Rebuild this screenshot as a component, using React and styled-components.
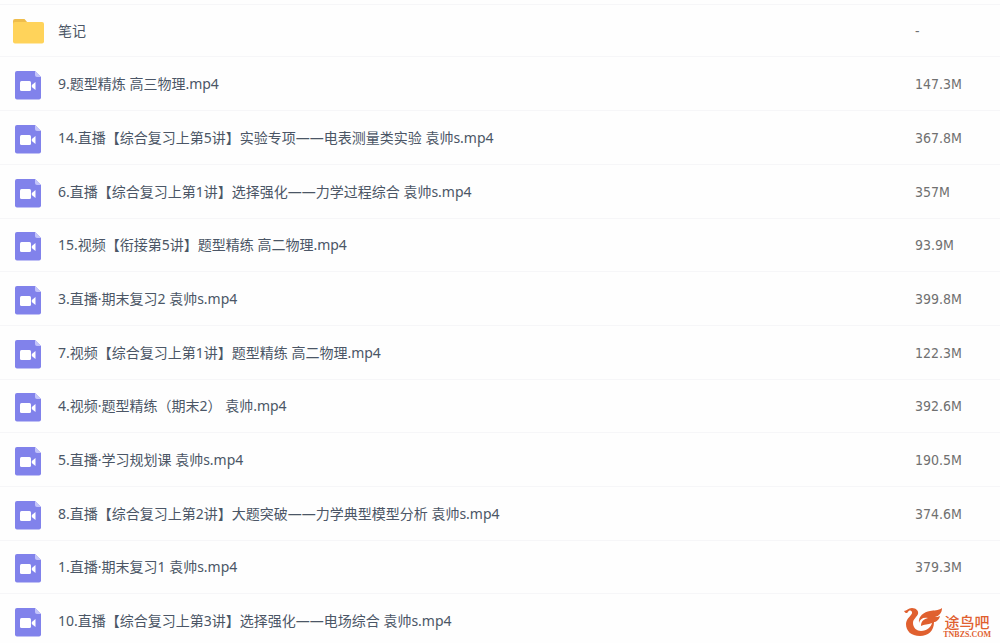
import styled, { createGlobalStyle } from "styled-components";

const GlobalStyle = createGlobalStyle`
  body {
    margin: 0;
    background: #fefefe;
    font-family: "Noto Sans", "Noto Sans CJK SC", sans-serif;
    font-size: 14px;
    line-height: 20px;
  }
`

const Page = styled.main`
  position: relative;
  height: 100vh;
  overflow: hidden;
`

const FileTable = styled.table`
  width: 100%;
  margin-top: 4px;
  border-spacing: 0;
  border-top: 1px solid #f6f6f8;
`

const FileRow = styled.tr`
  height: 54px;
  &:first-child {
    height: 52px;
  }
  &:nth-child(3n + 5) {
    height: 53px;
  }
`

const Cell = styled.td`
  padding: 0;
  border-bottom: 1px solid #f6f6f8;
  vertical-align: middle;
`

const IconCell = styled(Cell)`
  width: 56px;
  svg {
    display: block;
    margin: 0 auto;
  }
`

const NameCell = styled(Cell)`
  padding-left: 2px;
`

const SizeCell = styled(Cell)`
  width: 85px;
  color: #707070;
  font-family: "DejaVu Sans Condensed", sans-serif;
`

const FileLink = styled.a`
  color: #4b5666;
  text-decoration: none;
  &:hover {
    color: #7c7ee8;
  }
`

const Brand = styled.div`
  position: absolute;
  right: 9px;
  bottom: 3px;
  display: flex;
  align-items: flex-end;
  color: #e0602f;
`

const BrandText = styled.div`
  display: flex;
  flex-direction: column;
  align-items: center;
`

const BrandName = styled.span`
  font-family: "Noto Sans CJK SC", sans-serif;
  font-size: 15px;
  font-weight: 500;
  line-height: 16px;
`

const BrandSite = styled.span`
  font-family: "Liberation Serif", serif;
  font-size: 8px;
  line-height: 10px;
  font-weight: bold;
`

const FolderIcon = () => (
  <svg width="32" height="26" viewBox="0 0 32 26">
    <path d="M1 3a2 2 0 0 1 2-2h9.500l3 3.500H29v6H1z" fill="#efbd4b" />
    <rect x="1" y="4" width="31" height="21.500" rx="2" fill="#ffd35a" />
  </svg>
)

const VideoIcon = () => (
  <svg width="26" height="32" viewBox="0 -2 26 32">
    <path d="M2 1H20L26 7V27.500a2 2 0 0 1-2 2H2a2 2 0 0 1-2-2V3a2 2 0 0 1 2-2z" fill="#8182eb" />
    <path d="M20 1L26 7H22a2 2 0 0 1-2-2z" fill="#c3c4fa" />
    <rect x="5" y="11" width="11" height="10" rx="1.500" fill="#fff" />
    <path d="M16.800 15L20.500 12V20L16.800 17z" fill="#fff" />
  </svg>
)

const BirdLogo = () => (
  <svg width="40" height="34" viewBox="0 0 40 34">
    <path
      d="M1 5C4 5 5 2 9 2c4 0 7 3 6 6-1 3-5 5-5 9 0 5 4 8 8 8 6 0 10-4 11-8-4 2-8 1-11 3 0-5 3-7 7-8-5-1-8 1-9 5-1-7 5-11 11-12C31 4 35 5 39 2c0 5-3 8-7 9 2 0 3 0 5-1-1 4-4 6-6 6 0 9-6 14-14 14C8 30 3 25 3 18c0-6 7-9 6-12C8 4 6 4 5 6 4 8 2 7 1 5z"
      fill="#e0602f"
    />
  </svg>
)

const files = [
  { name: "笔记", size: "-", folder: true },
  { name: "9.题型精炼 高三物理.mp4", size: "147.3M" },
  { name: "14.直播【综合复习上第5讲】实验专项——电表测量类实验 袁帅s.mp4", size: "367.8M" },
  { name: "6.直播【综合复习上第1讲】选择强化——力学过程综合 袁帅s.mp4", size: "357M" },
  { name: "15.视频【衔接第5讲】题型精练 高二物理.mp4", size: "93.9M" },
  { name: "3.直播·期末复习2 袁帅s.mp4", size: "399.8M" },
  { name: "7.视频【综合复习上第1讲】题型精练 高二物理.mp4", size: "122.3M" },
  { name: "4.视频·题型精练（期末2） 袁帅.mp4", size: "392.6M" },
  { name: "5.直播·学习规划课 袁帅s.mp4", size: "190.5M" },
  { name: "8.直播【综合复习上第2讲】大题突破——力学典型模型分析 袁帅s.mp4", size: "374.6M" },
  { name: "1.直播·期末复习1 袁帅s.mp4", size: "379.3M" },
  { name: "10.直播【综合复习上第3讲】选择强化——电场综合 袁帅s.mp4" },
]

const App = () => {
  return (
    <Page lang="zh-CN">
      <GlobalStyle />
      <FileTable>
        <tbody>
          {files.map((file) => (
            <FileRow key={file.name}>
              <IconCell>{file.folder ? <FolderIcon /> : <VideoIcon />}</IconCell>
              <NameCell>
                <FileLink href="#">{file.name}</FileLink>
              </NameCell>
              <SizeCell>{file.size}</SizeCell>
            </FileRow>
          ))}
        </tbody>
      </FileTable>
      <Brand>
        <BirdLogo />
        <BrandText>
          <BrandName>途鸟吧</BrandName>
          <BrandSite>TNBZS.COM</BrandSite>
        </BrandText>
      </Brand>
    </Page>
  )
}

export default App;
